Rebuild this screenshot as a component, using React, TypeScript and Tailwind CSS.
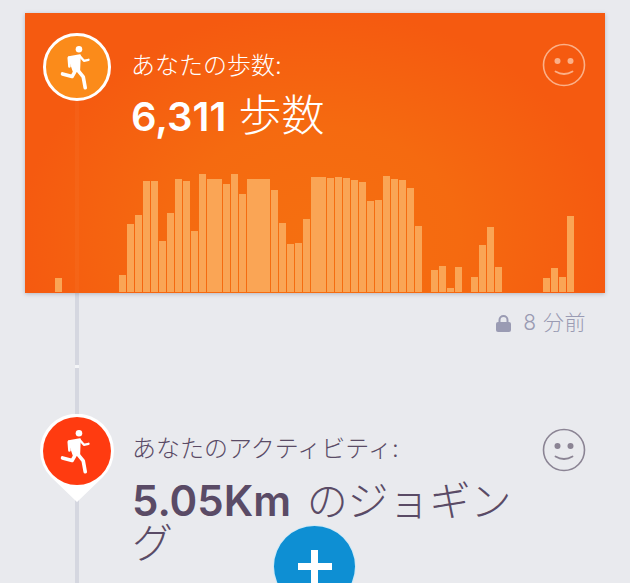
import React from "react";

const font = { jp: "font-['Inter','Noto_Sans_CJK_JP',sans-serif]" };

// bar height in px per slot; 0 means no bar there. second value: bar touches the next one
const bars: [number, boolean?][] = [
  [14], [0], [0], [0], [0], [0], [0], [0],
  [17], [68], [77], [111], [111], [51], [79], [113], [111], [61], [118],
  [113, true], [113], [108], [118], [98], [113, true], [113, true], [113], [102], [69], [48], [49], [73],
  [115, true], [115], [114], [115], [114], [112], [110], [91], [92], [116], [113], [112], [104], [66],
  [0], [22], [26], [4], [25], [0], [15], [47], [65], [25],
  [0], [0], [0], [0], [0],
  [14], [24], [15], [76],
];

const Runner = ({ className }: { className?: string }) => (
  <svg viewBox="180 130 102 140" className={className} fill="none" stroke="currentColor" strokeLinecap="round" strokeLinejoin="round">
    <circle cx="237" cy="146" r="10" fill="currentColor" stroke="none" />
    <path d="M206 170 L240 164 L238 212 L220 212 Z" fill="currentColor" strokeWidth="5" />
    <path d="M240 167 L252 181 L266 178" strokeWidth="7" />
    <path d="M206 172 L208 198" strokeWidth="8" />
    <path d="M228 208 L216 229 L187 221" strokeWidth="11" />
    <path d="M232 208 L250 230 L256 263" strokeWidth="11" />
  </svg>
);

const Smiley = ({ className }: { className?: string }) => (
  <svg viewBox="0 0 44 44" className={className} fill="none" stroke="currentColor">
    <circle cx="22" cy="22" r="20.5" strokeWidth="1.6" />
    <circle cx="15.5" cy="18" r="3" fill="currentColor" stroke="none" />
    <circle cx="28.5" cy="18" r="3" fill="currentColor" stroke="none" />
    <path d="M13.5 28.5 Q22 33.5 30.5 28.5" strokeWidth="1.8" strokeLinecap="round" />
  </svg>
);

const Pin = () => (
  <svg viewBox="0 0 74 88" className="w-[74px] h-[88px]">
    <path d="M37 88 L11 63 A37 37 0 1 1 63 63 Z" fill="#ffffff" />
    <circle cx="37" cy="37" r="34" fill="#ff3b10" />
  </svg>
);

export default function App() {
  return (
    <div className={`relative w-[630px] h-[583px] overflow-hidden bg-[#e9eaee] ${font.jp}`}>
      {/* timeline */}
      <div className="absolute left-[75px] top-[90px] bottom-0 w-[4px] bg-[#d5d7e0]" />
      <div className="absolute left-[75px] top-[365px] w-[4px] h-[3px] bg-[#f4f5f7]" />

      <div className="relative pt-[13px] px-[25px]">
        <div className="relative h-[280px] flex flex-col justify-between bg-[radial-gradient(ellipse_at_50%_80%,#f56f10_0%,#f56a10_35%,#f55a10_72%)] shadow-[0_1px_4px_rgba(90,90,110,0.35)]">
          <div className="absolute left-[50px] top-[85px] bottom-0 w-[4px] bg-white/[0.03]" />
          <div className="flex items-start pl-[18px] pr-[19px] pt-[20px]">
            <div className="w-[68px] h-[68px] rounded-full border-[3px] border-white bg-[#fb8b1a] flex items-center justify-center shrink-0">
              <Runner className="w-[34px] h-[46px] text-white" />
            </div>
            <div className="flex-1 pl-[20px] pt-[14px] text-white">
              <p className="text-[24px] leading-[38px] font-light">あなたの歩数:</p>
              <p className="text-[43px] leading-[50px] font-light mt-[5px]">
                <span className="font-semibold text-[40px]">6,311</span> 歩数
              </p>
            </div>
            <Smiley className="w-[44px] h-[44px] mt-[10px] text-[#fbb088]" />
          </div>
          <div className="flex items-end h-[120px] pl-[30px] pb-[1px]">
            {bars.map(([h, joined], i) => (
              <div key={i} className="w-[8px] shrink-0">
                <div className={`bg-[#faa555] ${joined ? "w-[8px]" : "w-[7px]"}`} style={{ height: h }} />
              </div>
            ))}
          </div>
        </div>

        <div className="flex items-center justify-end gap-[12px] pt-[15px] pr-[19px] text-[#9a9bb3]">
          <svg viewBox="0 0 15 17" className="w-[15px] h-[17px]" fill="none">
            <path d="M3.5 8 V5 a4 4 0 0 1 8 0 V8" stroke="currentColor" strokeWidth="2" />
            <rect x="0" y="7" width="15" height="10" rx="2" fill="currentColor" />
          </svg>
          <span className="text-[21px] leading-[30px] font-light tracking-[0.5px]">8 分前</span>
        </div>
      </div>

      <div className="relative flex items-start pl-[40px] pr-[44px] pt-[76px] text-[#5a4b66]">
        <div className="shrink-0">
          <div className="relative w-[74px] h-[88px]">
            <Pin />
            <div className="absolute left-0 top-0 w-[74px] h-[74px] flex items-center justify-center">
              <Runner className="w-[34px] h-[46px] text-white" />
            </div>
          </div>
        </div>
        <div className="w-[418px] pl-[18px] pt-[16px]">
          <p className="text-[24px] leading-[38px] font-light">あなたのアクティビティ:</p>
          <p className="text-[41px] leading-[42px] font-light mt-[12px]">
            <span className="font-semibold text-[42px] mr-[4px]">5.05Km</span> のジョギング
          </p>
        </div>
        <Smiley className="w-[44px] h-[44px] ml-auto mt-[14px] text-[#8b8494]" />
      </div>

      {/* add button */}
      <div className="absolute left-[273px] top-[525px] w-[83px] h-[83px] rounded-full bg-[#0e8fd3] border border-white/80 flex items-center justify-center">
        <div className="relative w-[34px] h-[34px]">
          <div className="absolute left-0 top-[13px] w-[34px] h-[7px] bg-white" />
          <div className="absolute left-[13px] top-0 w-[7px] h-[34px] bg-white" />
        </div>
      </div>
    </div>
  );
}
